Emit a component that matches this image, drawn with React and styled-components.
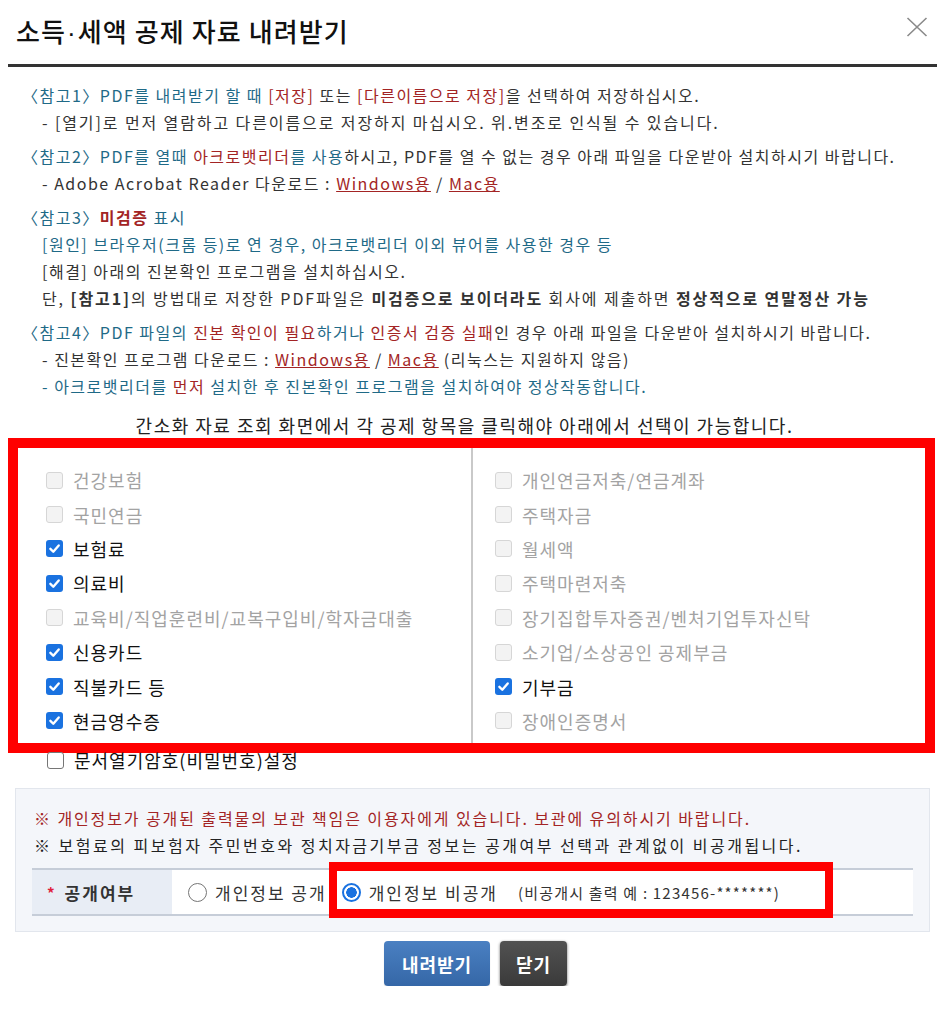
import React from "react";
import styled, { createGlobalStyle } from "styled-components";

const leftItems = [
  { label: "건강보험", checked: false },
  { label: "국민연금", checked: false },
  { label: "보험료", checked: true },
  { label: "의료비", checked: true },
  { label: "교육비/직업훈련비/교복구입비/학자금대출", checked: false },
  { label: "신용카드", checked: true },
  { label: "직불카드 등", checked: true },
  { label: "현금영수증", checked: true },
];

const rightItems = [
  { label: "개인연금저축/연금계좌", checked: false },
  { label: "주택자금", checked: false },
  { label: "월세액", checked: false },
  { label: "주택마련저축", checked: false },
  { label: "장기집합투자증권/벤처기업투자신탁", checked: false },
  { label: "소기업/소상공인 공제부금", checked: false },
  { label: "기부금", checked: true },
  { label: "장애인증명서", checked: false },
];

function Check({ checked, disabled }) {
  return (
    <CheckBox checked={checked} disabled={disabled}>
      {checked && (
        <svg width="13" height="13" viewBox="0 0 12 12">
          <path d="M2.2 6.3 L4.9 9 L9.9 3.2" fill="none" stroke="#fff" strokeWidth="2.2" strokeLinecap="round" strokeLinejoin="round" />
        </svg>
      )}
    </CheckBox>
  );
}

export default function App() {
  return (
    <>
      <GlobalStyle />
      <Dialog>
        <Header>
          <Title>
            소득<Dot>·</Dot>세액 공제 자료 내려받기
          </Title>
          <CloseButton aria-label="닫기">
            <svg width="22" height="20" viewBox="0 0 22 20">
              <path d="M1.5 1 L20.5 19 M20.5 1 L1.5 19" stroke="#8a8a8a" strokeWidth="1.6" />
            </svg>
          </CloseButton>
        </Header>

        <Notes>
          <NoteGroup>
            <NoteLine>
              <Ref>〈참고1〉PDF를 내려받기 할 때 </Ref>
              <Hl>[저장]</Hl> 또는 <Hl>[다른이름으로 저장]</Hl>을 선택하여 저장하십시오.
            </NoteLine>
            <NoteLine indent wide>- [열기]로 먼저 열람하고 다른이름으로 저장하지 마십시오. 위.변조로 인식될 수 있습니다.</NoteLine>
          </NoteGroup>

          <NoteGroup>
            <NoteLine>
              <Ref>〈참고2〉PDF를 열때 </Ref>
              <Hl>아크로뱃리더</Hl>
              <Ref>를 사용</Ref>하시고, PDF를 열 수 없는 경우 아래 파일을 다운받아 설치하시기 바랍니다.
            </NoteLine>
            <NoteLine indent>
              - Adobe Acrobat Reader 다운로드 : <DownLink>Windows용</DownLink> / <DownLink>Mac용</DownLink>
            </NoteLine>
          </NoteGroup>

          <NoteGroup>
            <NoteLine>
              <Ref>〈참고3〉</Ref>
              <Hl bold>미검증</Hl>
              <Ref> 표시</Ref>
            </NoteLine>
            <NoteLine indent>
              <Ref>[원인] 브라우저(크롬 등)로 연 경우, 아크로뱃리더 이외 뷰어를 사용한 경우 등</Ref>
            </NoteLine>
            <NoteLine indent>[해결] 아래의 진본확인 프로그램을 설치하십시오.</NoteLine>
            <NoteLine indent wide>
              단, <b>[참고1]</b>의 방법대로 저장한 PDF파일은 <b>미검증으로 보이더라도</b> 회사에 제출하면{" "}
              <b>정상적으로 연말정산 가능</b>
            </NoteLine>
          </NoteGroup>

          <NoteGroup>
            <NoteLine>
              <Ref>〈참고4〉PDF 파일의 </Ref>
              <Hl>진본 확인이 필요</Hl>
              <Ref>하거나 </Ref>
              <Hl>인증서 검증 실패</Hl>인 경우 아래 파일을 다운받아 설치하시기 바랍니다.
            </NoteLine>
            <NoteLine indent>
              - 진본확인 프로그램 다운로드 : <DownLink>Windows용</DownLink> / <DownLink>Mac용</DownLink> (리눅스는 지원하지 않음)
            </NoteLine>
            <NoteLine indent>
              <Ref>- 아크로뱃리더를 </Ref>
              <Hl>먼저</Hl>
              <Ref> 설치한 후 진본확인 프로그램을 설치하여야 정상작동합니다.</Ref>
            </NoteLine>
          </NoteGroup>
        </Notes>

        <Guide>간소화 자료 조회 화면에서 각 공제 항목을 클릭해야 아래에서 선택이 가능합니다.</Guide>

        <RedFrame>
          <ItemTable>
            <ItemColumn divider>
              {leftItems.map((it) => (
                <CheckItem key={it.label} disabled={!it.checked}>
                  <Check checked={it.checked} disabled={!it.checked} />
                  {it.label}
                </CheckItem>
              ))}
            </ItemColumn>
            <ItemColumn>
              {rightItems.map((it) => (
                <CheckItem key={it.label} disabled={!it.checked}>
                  <Check checked={it.checked} disabled={!it.checked} />
                  {it.label}
                </CheckItem>
              ))}
            </ItemColumn>
          </ItemTable>
        </RedFrame>

        <PasswordRow>
          <Check checked={false} />
          문서열기암호(비밀번호)설정
        </PasswordRow>

        <InfoBox>
          <InfoLine warn>※ 개인정보가 공개된 출력물의 보관 책임은 이용자에게 있습니다. 보관에 유의하시기 바랍니다.</InfoLine>
          <InfoLine wide>※ 보험료의 피보험자 주민번호와 정치자금기부금 정보는 공개여부 선택과 관계없이 비공개됩니다.</InfoLine>
          <FormTable>
            <LabelCell>
              <Star>*</Star>공개여부
            </LabelCell>
            <ValueCell>
              <RadioItem>
                <Radio />
                개인정보 공개
              </RadioItem>
              <MarkedRadioItem>
                <Radio checked />
                개인정보 비공개
                <Example>(비공개시 출력 예 : 123456-*******)</Example>
              </MarkedRadioItem>
            </ValueCell>
          </FormTable>
        </InfoBox>

        <Buttons>
          <Button primary>내려받기</Button>
          <Button>닫기</Button>
        </Buttons>
      </Dialog>
    </>
  );
}

const GlobalStyle = createGlobalStyle`
  body {
    margin: 0;
    background: #fff;
    font-family: "Noto Sans CJK KR", "Noto Sans", sans-serif;
    color: #333;
  }
  * { box-sizing: border-box; }
`;

const Dialog = styled.div`
  width: 929px;
  margin-left: 8px;
`;

const Header = styled.header`
  display: flex;
  align-items: center;
  justify-content: space-between;
  height: 67px;
  padding: 0 9px 3px 8px;
  border-bottom: 3px solid #333;
`;

const Title = styled.h1`
  margin: 0;
  font-size: 26px;
  font-weight: 500;
  color: #111;
  letter-spacing: 1.1px;
`;

const Dot = styled.span`
  font-family: "Liberation Sans", sans-serif;
  margin: 0 1px;
`;

const CloseButton = styled.button`
  border: none;
  background: none;
  padding: 0;
  margin-top: -4px;
  cursor: pointer;
`;

const Notes = styled.section`
  padding: 15px 0 0 14px;
`;

const NoteGroup = styled.div`
  & + & {
    margin-top: 7px;
  }
`;

const NoteLine = styled.div`
  font-size: 16px;
  line-height: 27px;
  letter-spacing: ${(p) => (p.wide ? "1.9px" : "1.5px")};
  color: #333;
  padding-left: ${(p) => (p.indent ? "20px" : "0")};
  white-space: nowrap;
`;

const Ref = styled.span`
  color: #1f6a87;
`;

const Hl = styled.span`
  color: #a32424;
  font-weight: ${(p) => (p.bold ? 700 : 400)};
`;

const DownLink = styled.a`
  color: #a32424;
  text-decoration: underline;
  cursor: pointer;
`;

const Guide = styled.p`
  margin: 13px 0 0;
  padding-right: 16px;
  text-align: center;
  font-size: 18px;
  line-height: 24px;
  letter-spacing: 1.5px;
  color: #222;
`;

const RedFrame = styled.div`
  margin-top: 1px;
  width: 927px;
  border: 10px solid #ff0000;
`;

const ItemTable = styled.div`
  display: grid;
  grid-template-columns: 455px 1fr;
  background: #fff;
`;

const ItemColumn = styled.div`
  padding: 15px 0 5px ${(p) => (p.divider ? "28px" : "22px")};
  border-right: ${(p) => (p.divider ? "2px solid #c9c9c9" : "none")};
`;

const CheckItem = styled.label`
  display: flex;
  align-items: center;
  gap: 10px;
  height: 34.4px;
  font-size: 18px;
  letter-spacing: 1px;
  color: ${(p) => (p.disabled ? "#a3a3a3" : "#111")};
`;

const CheckBox = styled.span`
  flex: none;
  display: inline-flex;
  align-items: center;
  justify-content: center;
  width: 17px;
  height: 17px;
  border-radius: 3px;
  background: ${(p) => (p.checked ? "#1a72e0" : p.disabled ? "#f3f3f3" : "#fff")};
  border: ${(p) =>
    p.checked ? "none" : p.disabled ? "1px solid #d6d6d6" : "1.5px solid #767676"};
`;

const PasswordRow = styled.label`
  display: flex;
  align-items: center;
  gap: 10px;
  height: 20px;
  margin-top: -3px;
  padding-left: 39px;
  font-size: 18px;
  letter-spacing: 1px;
  color: #111;
`;

const InfoBox = styled.div`
  margin: 18px 0 0 7px;
  width: 915px;
  background: #f4f6fa;
  border: 1px solid #e2e6ed;
  padding: 16px 16px 15px 16px;
`;

const InfoLine = styled.div`
  padding-left: 2px;
  font-size: 16px;
  line-height: 27px;
  letter-spacing: ${(p) => (p.wide ? "2.5px" : "1.9px")};
  color: ${(p) => (p.warn ? "#a32424" : "#222")};
  white-space: nowrap;
`;

const FormTable = styled.div`
  display: flex;
  margin-top: 9px;
  height: 48px;
  border-top: 2px solid #c6cdd8;
  border-bottom: 2px solid #c6cdd8;
`;

const LabelCell = styled.div`
  display: flex;
  align-items: center;
  width: 140px;
  padding-left: 15px;
  background: #e8edf5;
  font-size: 17px;
  font-weight: 600;
  letter-spacing: 2px;
  color: #333;
`;

const Star = styled.span`
  color: #e0203b;
  font-size: 15px;
  margin-right: 8px;
`;

const ValueCell = styled.div`
  flex: 1;
  display: flex;
  align-items: stretch;
  padding-left: 16px;
  background: #fff;
`;

const RadioItem = styled.label`
  display: flex;
  align-items: center;
  gap: 8px;
  font-size: 17px;
  letter-spacing: 2px;
  color: #333;
  white-space: nowrap;
`;

const MarkedRadioItem = styled(RadioItem)`
  position: relative;
  flex: none;
  width: 504px;
  margin-left: 2px;
  padding-left: 13px;

  &::after {
    content: "";
    position: absolute;
    top: -8px;
    bottom: -4px;
    left: 0;
    right: 0;
    border: 9px solid #ff0000;
    border-left-width: 8px;
    border-right-width: 8px;
    pointer-events: none;
  }
`;

const Radio = styled.span`
  flex: none;
  width: 19px;
  height: 19px;
  border-radius: 50%;
  border: ${(p) => (p.checked ? "2px solid #1a72e0" : "1.5px solid #767676")};
  background: ${(p) =>
    p.checked ? "radial-gradient(circle, #1a72e0 0 5px, #fff 5.5px)" : "#fff"};
`;

const Example = styled.span`
  margin-left: 12px;
  font-size: 15px;
  letter-spacing: 1.2px;
  color: #333;
`;

const Buttons = styled.div`
  display: flex;
  justify-content: center;
  gap: 10px;
  margin-top: 9px;
  padding-left: 6px;
`;

const Button = styled.button`
  height: 45px;
  width: ${(p) => (p.primary ? "106px" : "67px")};
  border: none;
  border-radius: 4px;
  font-family: inherit;
  font-size: 18px;
  font-weight: 700;
  letter-spacing: 1px;
  color: #fff;
  cursor: pointer;
  background: ${(p) =>
    p.primary ? "linear-gradient(#4a80c2, #3567a7)" : "linear-gradient(#525252, #3a3a3a)"};
  box-shadow: ${(p) => (p.primary ? "0 1px 1px rgba(0,0,0,0.2)" : "0 1px 3px rgba(0,0,0,0.6)")};
`;
